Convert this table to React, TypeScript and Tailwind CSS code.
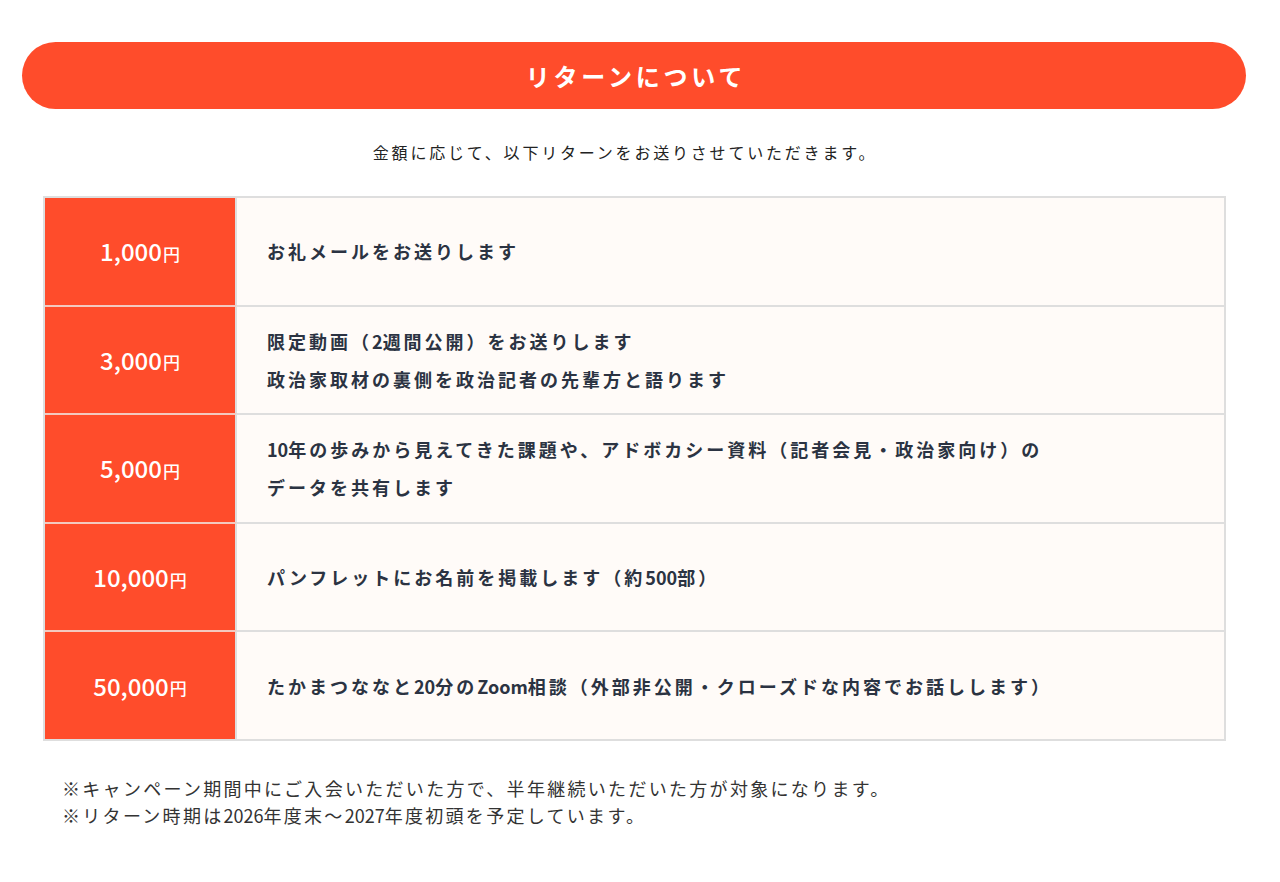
import React from "react";

const rows: { amount: string; lines: string[] }[] = [
  { amount: "1,000", lines: ["お礼メールをお送りします"] },
  { amount: "3,000", lines: ["限定動画（2週間公開）をお送りします", "政治家取材の裏側を政治記者の先輩方と語ります"] },
  { amount: "5,000", lines: ["10年の歩みから見えてきた課題や、アドボカシー資料（記者会見・政治家向け）の", "データを共有します"] },
  { amount: "10,000", lines: ["パンフレットにお名前を掲載します（約500部）"] },
  { amount: "50,000", lines: ["たかまつななと20分のZoom相談（外部非公開・クローズドな内容でお話しします）"] },
];

function Tight({ text }: { text: string }) {
  const parts = text.split(/([0-9A-Za-z]+)/);
  return (
    <>
      {parts.map((p, i) =>
        /^[0-9A-Za-z]+$/.test(p) ? (
          <span key={i} className="tracking-[0px]">
            {p}
          </span>
        ) : (
          <React.Fragment key={i}>{p}</React.Fragment>
        )
      )}
    </>
  );
}

export default function App() {
  return (
    <div
      className="w-[1280px] min-h-[882px] bg-white pt-[42px]"
      style={{ fontFamily: '"Noto Sans CJK JP", "Noto Sans", sans-serif' }}
    >
      <div className="ml-[22px] w-[1224px] h-[67px] rounded-full bg-[#ff4c2b] flex items-center justify-center">
        <h2 className="text-white font-bold text-[24px] tracking-[3.8px] leading-none pl-[4px]">リターンについて</h2>
      </div>
      <p className="mt-[31px] pr-[30px] text-center text-[16px] leading-[24px] tracking-[2.8px] text-[#222]">
        金額に応じて、以下リターンをお送りさせていただきます。
      </p>
      <div className="mt-[32px] ml-[43px] w-[1183px] border-2 border-[#dedede]">
        {rows.map((r, i) => (
          <div key={r.amount} className={`flex ${i > 0 ? "h-[108.6px] border-t-2 border-[#dedede]" : "h-[106.6px]"}`}>
            <div className={`w-[192px] shrink-0 bg-[#ff4c2b] border-r-2 border-[#dedede] flex items-center justify-center text-white font-medium ${i > 0 ? "-mt-[2px] border-t-2 border-t-[#f3c9bf]" : ""}`}>
              <span className="text-[24px] leading-none">{r.amount}</span>
              <span className="text-[17px] leading-none ml-[1px] mt-[4px]">円</span>
            </div>
            <div className="flex-1 bg-[#fffbf8] flex flex-col justify-center pl-[30px]">
              {r.lines.map((l) => (
                <div key={l} className="text-[18px] leading-[38px] font-bold tracking-[3px] text-[#2b3342]">
                  <Tight text={l} />
                </div>
              ))}
            </div>
          </div>
        ))}
      </div>
      <div className="mt-[34px] ml-[62px] text-[18px] leading-[27px] tracking-[2.3px] text-[#333]">
        <p>※キャンペーン期間中にご入会いただいた方で、半年継続いただいた方が対象になります。</p>
        <p>
          <Tight text="※リターン時期は2026年度末〜2027年度初頭を予定しています。" />
        </p>
      </div>
    </div>
  );
}
